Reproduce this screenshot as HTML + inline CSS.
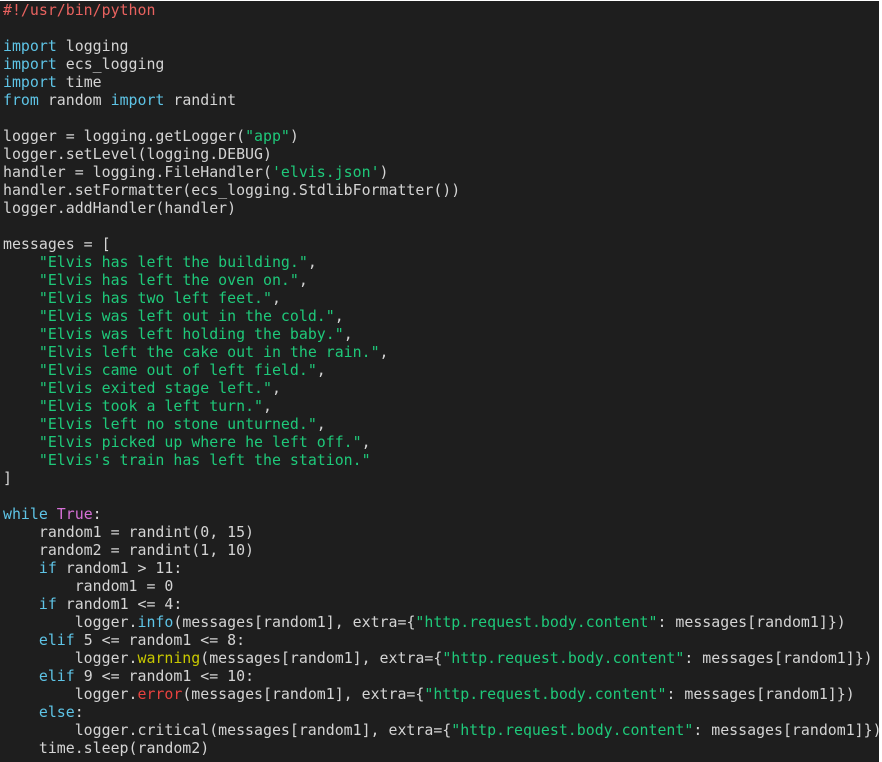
<!DOCTYPE html>
<html><head><meta charset="utf-8"><style>
html,body{margin:0;padding:0;background:#fff;}
#t{position:absolute;left:0;top:1px;width:879px;height:761px;background:#1e1e1e;overflow:hidden;}
pre{margin:0;padding:0 0 0 3px;font-family:"DejaVu Sans Mono","Liberation Mono",monospace;font-size:14.9px;line-height:18px;color:#d4d4d4;white-space:pre;}
.c{color:#e8625f}.k{color:#5ec4e6}.s{color:#1ec97a}.m{color:#d670d6}.w{color:#c8c800}.e{color:#e8423f}
</style></head><body><div id="t"><pre><span class="c">#!/usr/bin/python</span>

<span class="k">import</span> logging
<span class="k">import</span> ecs_logging
<span class="k">import</span> time
<span class="k">from</span> random <span class="k">import</span> randint

logger = logging.getLogger(<span class="s">"app"</span>)
logger.setLevel(logging.DEBUG)
handler = logging.FileHandler(<span class="s">'elvis.json'</span>)
handler.setFormatter(ecs_logging.StdlibFormatter())
logger.addHandler(handler)

messages = [
    <span class="s">"Elvis has left the building."</span>,
    <span class="s">"Elvis has left the oven on."</span>,
    <span class="s">"Elvis has two left feet."</span>,
    <span class="s">"Elvis was left out in the cold."</span>,
    <span class="s">"Elvis was left holding the baby."</span>,
    <span class="s">"Elvis left the cake out in the rain."</span>,
    <span class="s">"Elvis came out of left field."</span>,
    <span class="s">"Elvis exited stage left."</span>,
    <span class="s">"Elvis took a left turn."</span>,
    <span class="s">"Elvis left no stone unturned."</span>,
    <span class="s">"Elvis picked up where he left off."</span>,
    <span class="s">"Elvis's train has left the station."</span>
]

<span class="k">while</span> <span class="m">True</span>:
    random1 = randint(0, 15)
    random2 = randint(1, 10)
    <span class="k">if</span> random1 &gt; 11:
        random1 = 0
    <span class="k">if</span> random1 &lt;= 4:
        logger.<span class="k">info</span>(messages[random1], extra={<span class="s">"http.request.body.content"</span>: messages[random1]})
    <span class="k">elif</span> 5 &lt;= random1 &lt;= 8:
        logger.<span class="w">warning</span>(messages[random1], extra={<span class="s">"http.request.body.content"</span>: messages[random1]})
    <span class="k">elif</span> 9 &lt;= random1 &lt;= 10:
        logger.<span class="e">error</span>(messages[random1], extra={<span class="s">"http.request.body.content"</span>: messages[random1]})
    <span class="k">else</span>:
        logger.critical(messages[random1], extra={<span class="s">"http.request.body.content"</span>: messages[random1]})
    time.sleep(random2)
</pre></div></body></html>
